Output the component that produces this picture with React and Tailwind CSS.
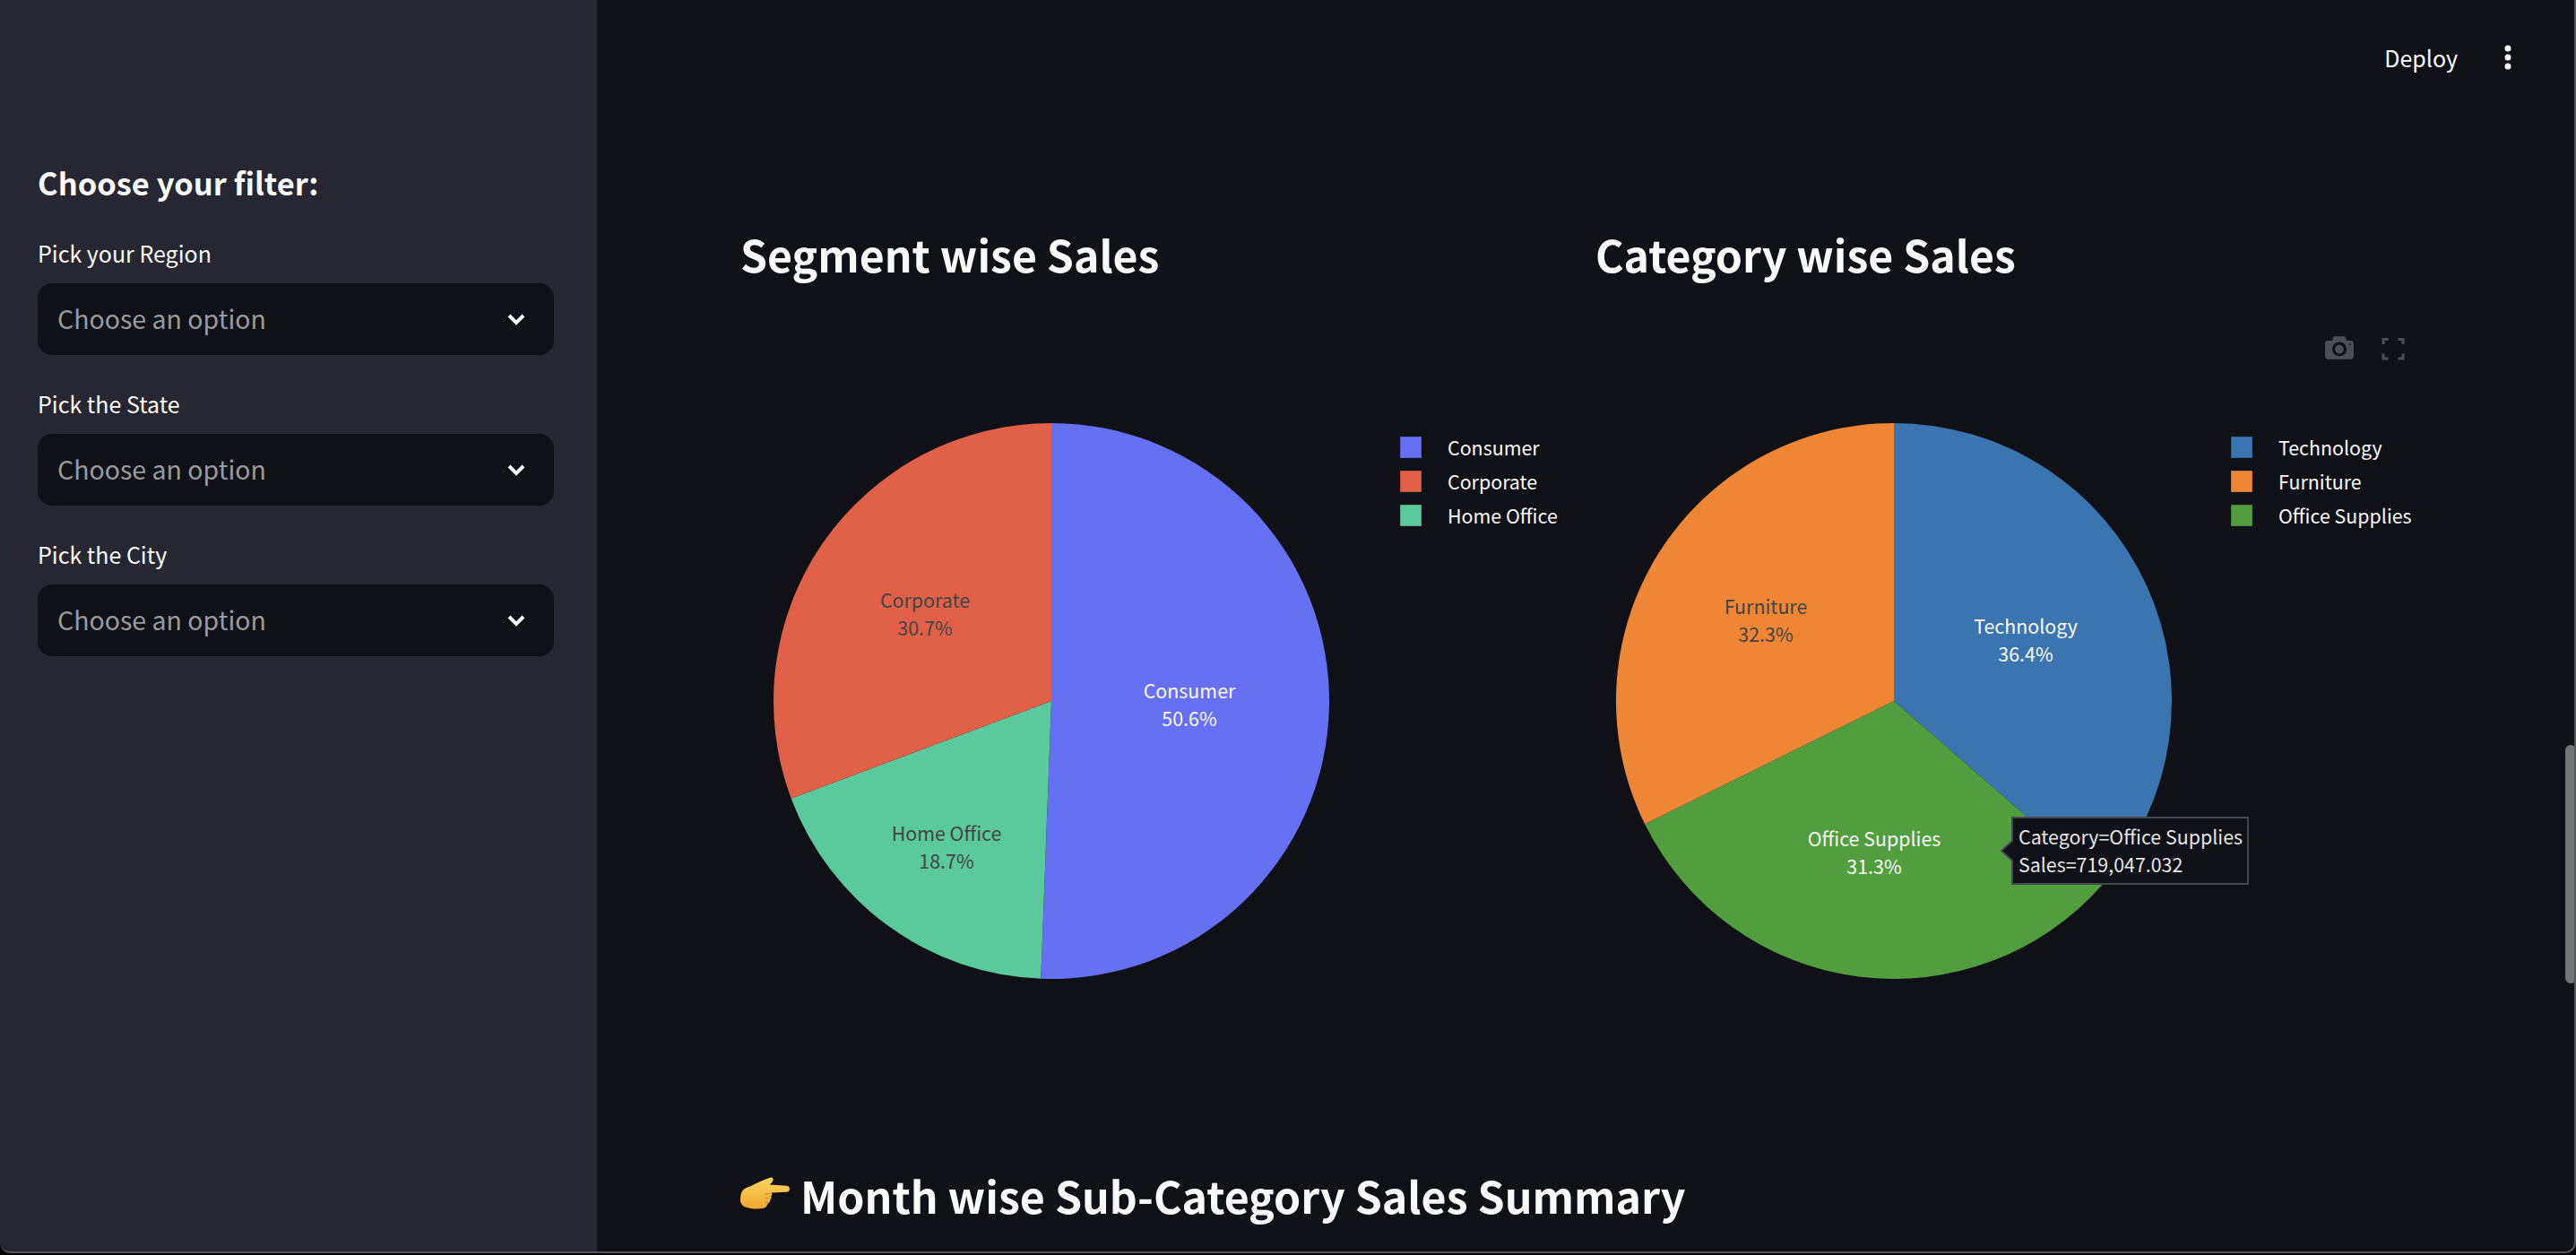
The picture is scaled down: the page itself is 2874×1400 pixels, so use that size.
const pageFont = '"Noto Sans CJK SC", "Noto Sans", sans-serif';

const segmentChart = {
  cx: 347,
  cy: 422,
  slices: [
    { name: 'Consumer', value: 50.6, color: '#6570f3', lx: 501, ly: 419, text: '#fafafa' },
    { name: 'Home Office', value: 18.7, color: '#5ac99b', lx: 230, ly: 578, text: '#444444' },
    { name: 'Corporate', value: 30.7, color: '#e06048', lx: 206, ly: 318, text: '#444444' },
  ],
  legend: [
    { name: 'Consumer', color: '#6570f3' },
    { name: 'Corporate', color: '#e06048' },
    { name: 'Home Office', color: '#5ac99b' },
  ],
  legendX: 736,
};

const categoryChart = {
  cx: 333,
  cy: 422,
  slices: [
    { name: 'Technology', value: 36.4, color: '#3b75af', lx: 480, ly: 347, text: '#fafafa' },
    { name: 'Office Supplies', value: 31.3, color: '#519e3e', lx: 311, ly: 584, text: '#fafafa' },
    { name: 'Furniture', value: 32.3, color: '#ef8636', lx: 190, ly: 325, text: '#444444' },
  ],
  legend: [
    { name: 'Technology', color: '#3b75af' },
    { name: 'Furniture', color: '#ef8636' },
    { name: 'Office Supplies', color: '#519e3e' },
  ],
  legendX: 709,
};

const RADIUS = 310;

function slicePath(cx, cy, from, to) {
  const a0 = (from / 100) * Math.PI * 2;
  const a1 = (to / 100) * Math.PI * 2;
  const x0 = cx + RADIUS * Math.sin(a0);
  const y0 = cy - RADIUS * Math.cos(a0);
  const x1 = cx + RADIUS * Math.sin(a1);
  const y1 = cy - RADIUS * Math.cos(a1);
  const large = to - from > 50 ? 1 : 0;
  return `M${cx} ${cy}L${x0} ${y0}A${RADIUS} ${RADIUS} 0 ${large} 1 ${x1} ${y1}Z`;
}

function PieChart({ chart, children }) {
  let start = 0;
  return (
    <svg viewBox="0 0 924 840" className="block w-full h-[840px] overflow-visible">
      {chart.slices.map(s => {
        const d = slicePath(chart.cx, chart.cy, start, start + s.value);
        start += s.value;
        return <path key={s.name} d={d} fill={s.color} />;
      })}
      {chart.slices.map(s => (
        <text key={s.name} textAnchor="middle" fontSize="21.4" fill={s.text}>
          <tspan x={s.lx} y={s.ly}>{s.name}</tspan>
          <tspan x={s.lx} dy="31">{s.value}%</tspan>
        </text>
      ))}
      {chart.legend.map((item, i) => (
        <g key={item.name}>
          <rect
            x={chart.legendX}
            y={127 + i * 38}
            width="24"
            height="24"
            fill={item.color}
            stroke="#0f1116"
            strokeOpacity="0.35"
          />
          <text x={chart.legendX + 53} y={148 + i * 38} fontSize="21.4" fill="#fafafa">
            {item.name}
          </text>
        </g>
      ))}
      {children}
    </svg>
  );
}

function FilterSelect({ label }) {
  return (
    <div className="mb-[34px]">
      <div className="text-[25px] leading-[40px] h-[40px] mb-[14px] text-[#fafafa]">{label}</div>
      <div className="flex items-center justify-between h-[80px] rounded-[16px] bg-[#0f1116] pl-[22px] pr-[32px]">
        <span className="text-[28.5px] leading-[40px] mb-[3px] text-[#9a9b9e]">Choose an option</span>
        <svg width="20" height="14" viewBox="0 0 20 14" fill="none" stroke="#fafafa" strokeWidth="4">
          <path d="M2 3l8 8 8-8" />
        </svg>
      </div>
    </div>
  );
}

function PointingHand() {
  return (
    <svg width="55" height="36" viewBox="0 0 55 36" className="shrink-0 mb-[4px]">
      <defs>
        <linearGradient id="hand" x1="0" y1="0" x2="0" y2="1">
          <stop offset="0" stopColor="#fcd462" />
          <stop offset="1" stopColor="#eeaa2e" />
        </linearGradient>
      </defs>
      <path
        d="M34 .6c2-.6 3.4 1.6 2.4 3.4-.8 1.6-2 3-3.8 4.6l19 1.2c2 .2 3.4 1.6 3.4 3.4s-1.4 3.4-3.4 3.6l-17 .8c1 1.4.8 3.2-.4 4.2.8 1.6.2 3.2-1.2 4 .4 1.8-.8 3.4-2.4 3.8-.4 2.4-2 4.6-4.5 5.2-5 1-13 1.2-18-.6C2.5 33 0 30 0 25c0-5 1-9 4-11.5 3-2 6-2.5 9-4 6-3 15-7 21-8.9z"
        fill="url(#hand)"
      />
      <path d="M33 18.5l-6 .5M32.5 23.5l-5 .3M31 28l-4 .2" stroke="#c98a20" strokeWidth="1" fill="none" />
    </svg>
  );
}

export default function App() {
  return (
    <div className="h-screen bg-black overflow-hidden" style={{ fontFamily: pageFont }}>
      <div className="relative flex h-[1398px] overflow-hidden rounded-b-[12px] border-b-2 border-r-2 border-[#55565a] bg-[#0f1116]">
        <aside className="w-[666px] shrink-0 bg-[#262730] pl-[42px] pr-[48px] pt-[176px]">
          <h2 className="text-[34.5px] leading-[54px] font-semibold text-[#fafafa] mb-[32px]">Choose your filter:</h2>
          <FilterSelect label="Pick your Region" />
          <FilterSelect label="Pick the State" />
          <FilterSelect label="Pick the City" />
        </aside>

        <main className="flex-1 min-w-0">
          <header className="flex items-center justify-end h-[128px] pr-[68px] text-[#fafafa]">
            <span className="text-[25px] leading-[40px]">Deploy</span>
            <svg width="12" height="32" viewBox="0 0 12 32" fill="#fafafa" className="ml-[50px]">
              <circle cx="6" cy="6" r="3.5" />
              <circle cx="6" cy="16" r="3.5" />
              <circle cx="6" cy="26" r="3.5" />
            </svg>
          </header>

          <div className="pl-[160px] pr-[168px]">
            <div className="grid grid-cols-2 gap-x-[30px] pt-[117px]">
              <h3 className="text-[48.2px] leading-[76px] font-semibold text-[#fafafa]">Segment wise Sales</h3>
              <h3 className="text-[48.2px] leading-[76px] font-semibold text-[#fafafa]">Category wise Sales</h3>
              <div className="mt-[39px]">
                <PieChart chart={segmentChart} />
              </div>
              <div className="mt-[39px]">
                <PieChart chart={categoryChart}>
                  <g transform="translate(814 12) scale(0.032)" fill="#4d4f54">
                    <path
                      transform="matrix(1 0 0 -1 0 850)"
                      d="m500 450c-83 0-150-67-150-150 0-83 67-150 150-150 83 0 150 67 150 150 0 83-67 150-150 150z m400 150h-120c-16 0-34 13-39 29l-31 93c-6 15-23 28-40 28h-340c-16 0-34-13-39-28l-31-94c-6-15-23-28-40-28h-120c-55 0-100-45-100-100v-450c0-55 45-100 100-100h800c55 0 100 45 100 100v450c0 55-45 100-100 100z m-400-550c-138 0-250 112-250 250 0 138 112 250 250 250 138 0 250-112 250-250 0-138-112-250-250-250z m365 380c-19 0-35 16-35 35 0 19 16 35 35 35 19 0 35-16 35-35 0-19-16-35-35-35z"
                    />
                  </g>
                  <path
                    d="M879 24v-5.5h5.5M895.5 18.5h5.5v5.5M901 34.5v5.5h-5.5M884.5 40h-5.5v-5.5"
                    fill="none"
                    stroke="#4d4f54"
                    strokeWidth="3"
                  />
                  <path
                    d="M465 552v26l-12 11 12 11v26h263v-74z"
                    fill="#0f1116"
                    stroke="#45474c"
                    strokeWidth="2"
                  />
                  <text fontSize="21.4" fill="#e6e6e8">
                    <tspan x="472" y="582">Category=Office Supplies</tspan>
                    <tspan x="472" y="613">Sales=719,047.032</tspan>
                  </text>
                </PieChart>
              </div>
            </div>

            <h3 className="flex items-center gap-[12px] mt-[95px] text-[48.3px] leading-[76px] font-semibold text-[#fafafa]">
              <PointingHand />
              Month wise Sub-Category Sales Summary
            </h3>
          </div>
        </main>

        <div className="absolute right-[-2px] top-[831px] h-[266px] w-[12px] rounded-full bg-[#737477]" />
      </div>
    </div>
  );
}
